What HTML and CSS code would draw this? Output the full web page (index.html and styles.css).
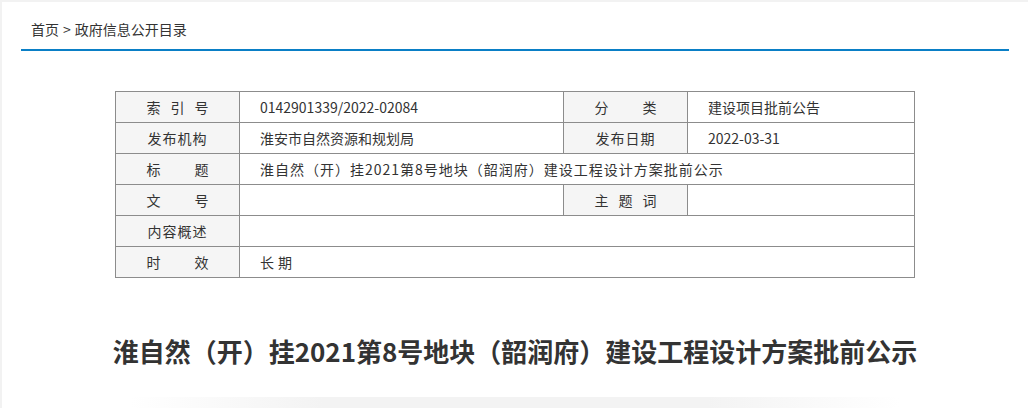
FILE: index.html
```html
<!DOCTYPE html>
<html lang="zh-CN">
<head>
  <meta charset="UTF-8" />
  <title>政府信息公开目录</title>
  <link rel="stylesheet" href="styles.css">
</head>
<body>

  <div class="page">
    <!-- Breadcrumb -->
    <div class="crumb">
      <a href="#">首页</a><span class="sep">&gt;</span><a href="#">政府信息公开目录</a>
    </div>

    <!-- Info table -->
    <table class="info">
      <colgroup>
        <col class="c-label">
        <col class="c-value">
        <col class="c-label">
        <col class="c-value2">
      </colgroup>
      <tr>
        <th><span class="lbl">索引号</span></th>
        <td>0142901339/2022-02084</td>
        <th><span class="lbl">分类</span></th>
        <td>建设项目批前公告</td>
      </tr>
      <tr>
        <th><span class="lbl4">发布机构</span></th>
        <td>淮安市自然资源和规划局</td>
        <th><span class="lbl4">发布日期</span></th>
        <td>2022-03-31</td>
      </tr>
      <tr>
        <th><span class="lbl">标题</span></th>
        <td colspan="3" class="wide">淮自然（开）挂2021第8号地块（韶润府）建设工程设计方案批前公示</td>
      </tr>
      <tr>
        <th><span class="lbl">文号</span></th>
        <td></td>
        <th><span class="lbl">主题词</span></th>
        <td></td>
      </tr>
      <tr>
        <th><span class="lbl4">内容概述</span></th>
        <td colspan="3"></td>
      </tr>
      <tr>
        <th><span class="lbl">时效</span></th>
        <td colspan="3"><span class="gap">长</span>期</td>
      </tr>
    </table>

    <h1 class="title">淮自然（开）挂2021第8号地块（韶润府）建设工程设计方案批前公示</h1>

    <div class="fade"></div>
  </div>

</body>
</html>
```

FILE: styles.css
```css
html, body {
  margin: 0;
  padding: 0;
  background: #f2f2f2;
  color: #333;
  font-family: "Noto Sans CJK SC", "Noto Sans", sans-serif;
  overflow: hidden;
}

.page {
  margin: 2px 0 0 2px;
  padding: 0 19px;
  height: 406px;
  background: #fff;
}

.crumb {
  padding: 17px 10px 10px;
  font-size: 14px;
  line-height: 20px;
  border-bottom: 2px solid #0a7fc6;
}

.crumb a {
  color: #333;
  text-decoration: none;
}

.crumb .sep {
  margin: 0 4px;
}

.info {
  width: 800px;
  margin: 40px auto 0;
  border-collapse: collapse;
  table-layout: fixed;
  font-size: 14px;
}

.c-label {
  width: 124px;
}

.c-value {
  width: 324px;
}

.info th,
.info td {
  height: 30px;
  padding: 0;
  border: 1px solid #8c8c8c;
  line-height: 20px;
}

.info th {
  background: #f5f5f5;
  font-weight: normal;
  text-align: center;
}

.info td {
  padding-left: 20px;
}

.info td.wide {
  letter-spacing: 1px;
}

.lbl {
  display: inline-block;
  width: 62px;
  text-align: justify;
  text-align-last: justify;
}

.lbl4 {
  letter-spacing: 1px;
}

.gap {
  margin-right: 4px;
}

.title {
  margin: 53px 0 0;
  font-size: 26px;
  line-height: 40px;
  font-weight: bold;
  text-align: center;
  color: #333;
}

.fade {
  width: 770px;
  height: 12px;
  margin: 26px auto 0;
  background: linear-gradient(to right, rgba(255, 255, 255, 0), #f3f3f3 25%, #f3f3f3 75%, rgba(255, 255, 255, 0));
}
```
